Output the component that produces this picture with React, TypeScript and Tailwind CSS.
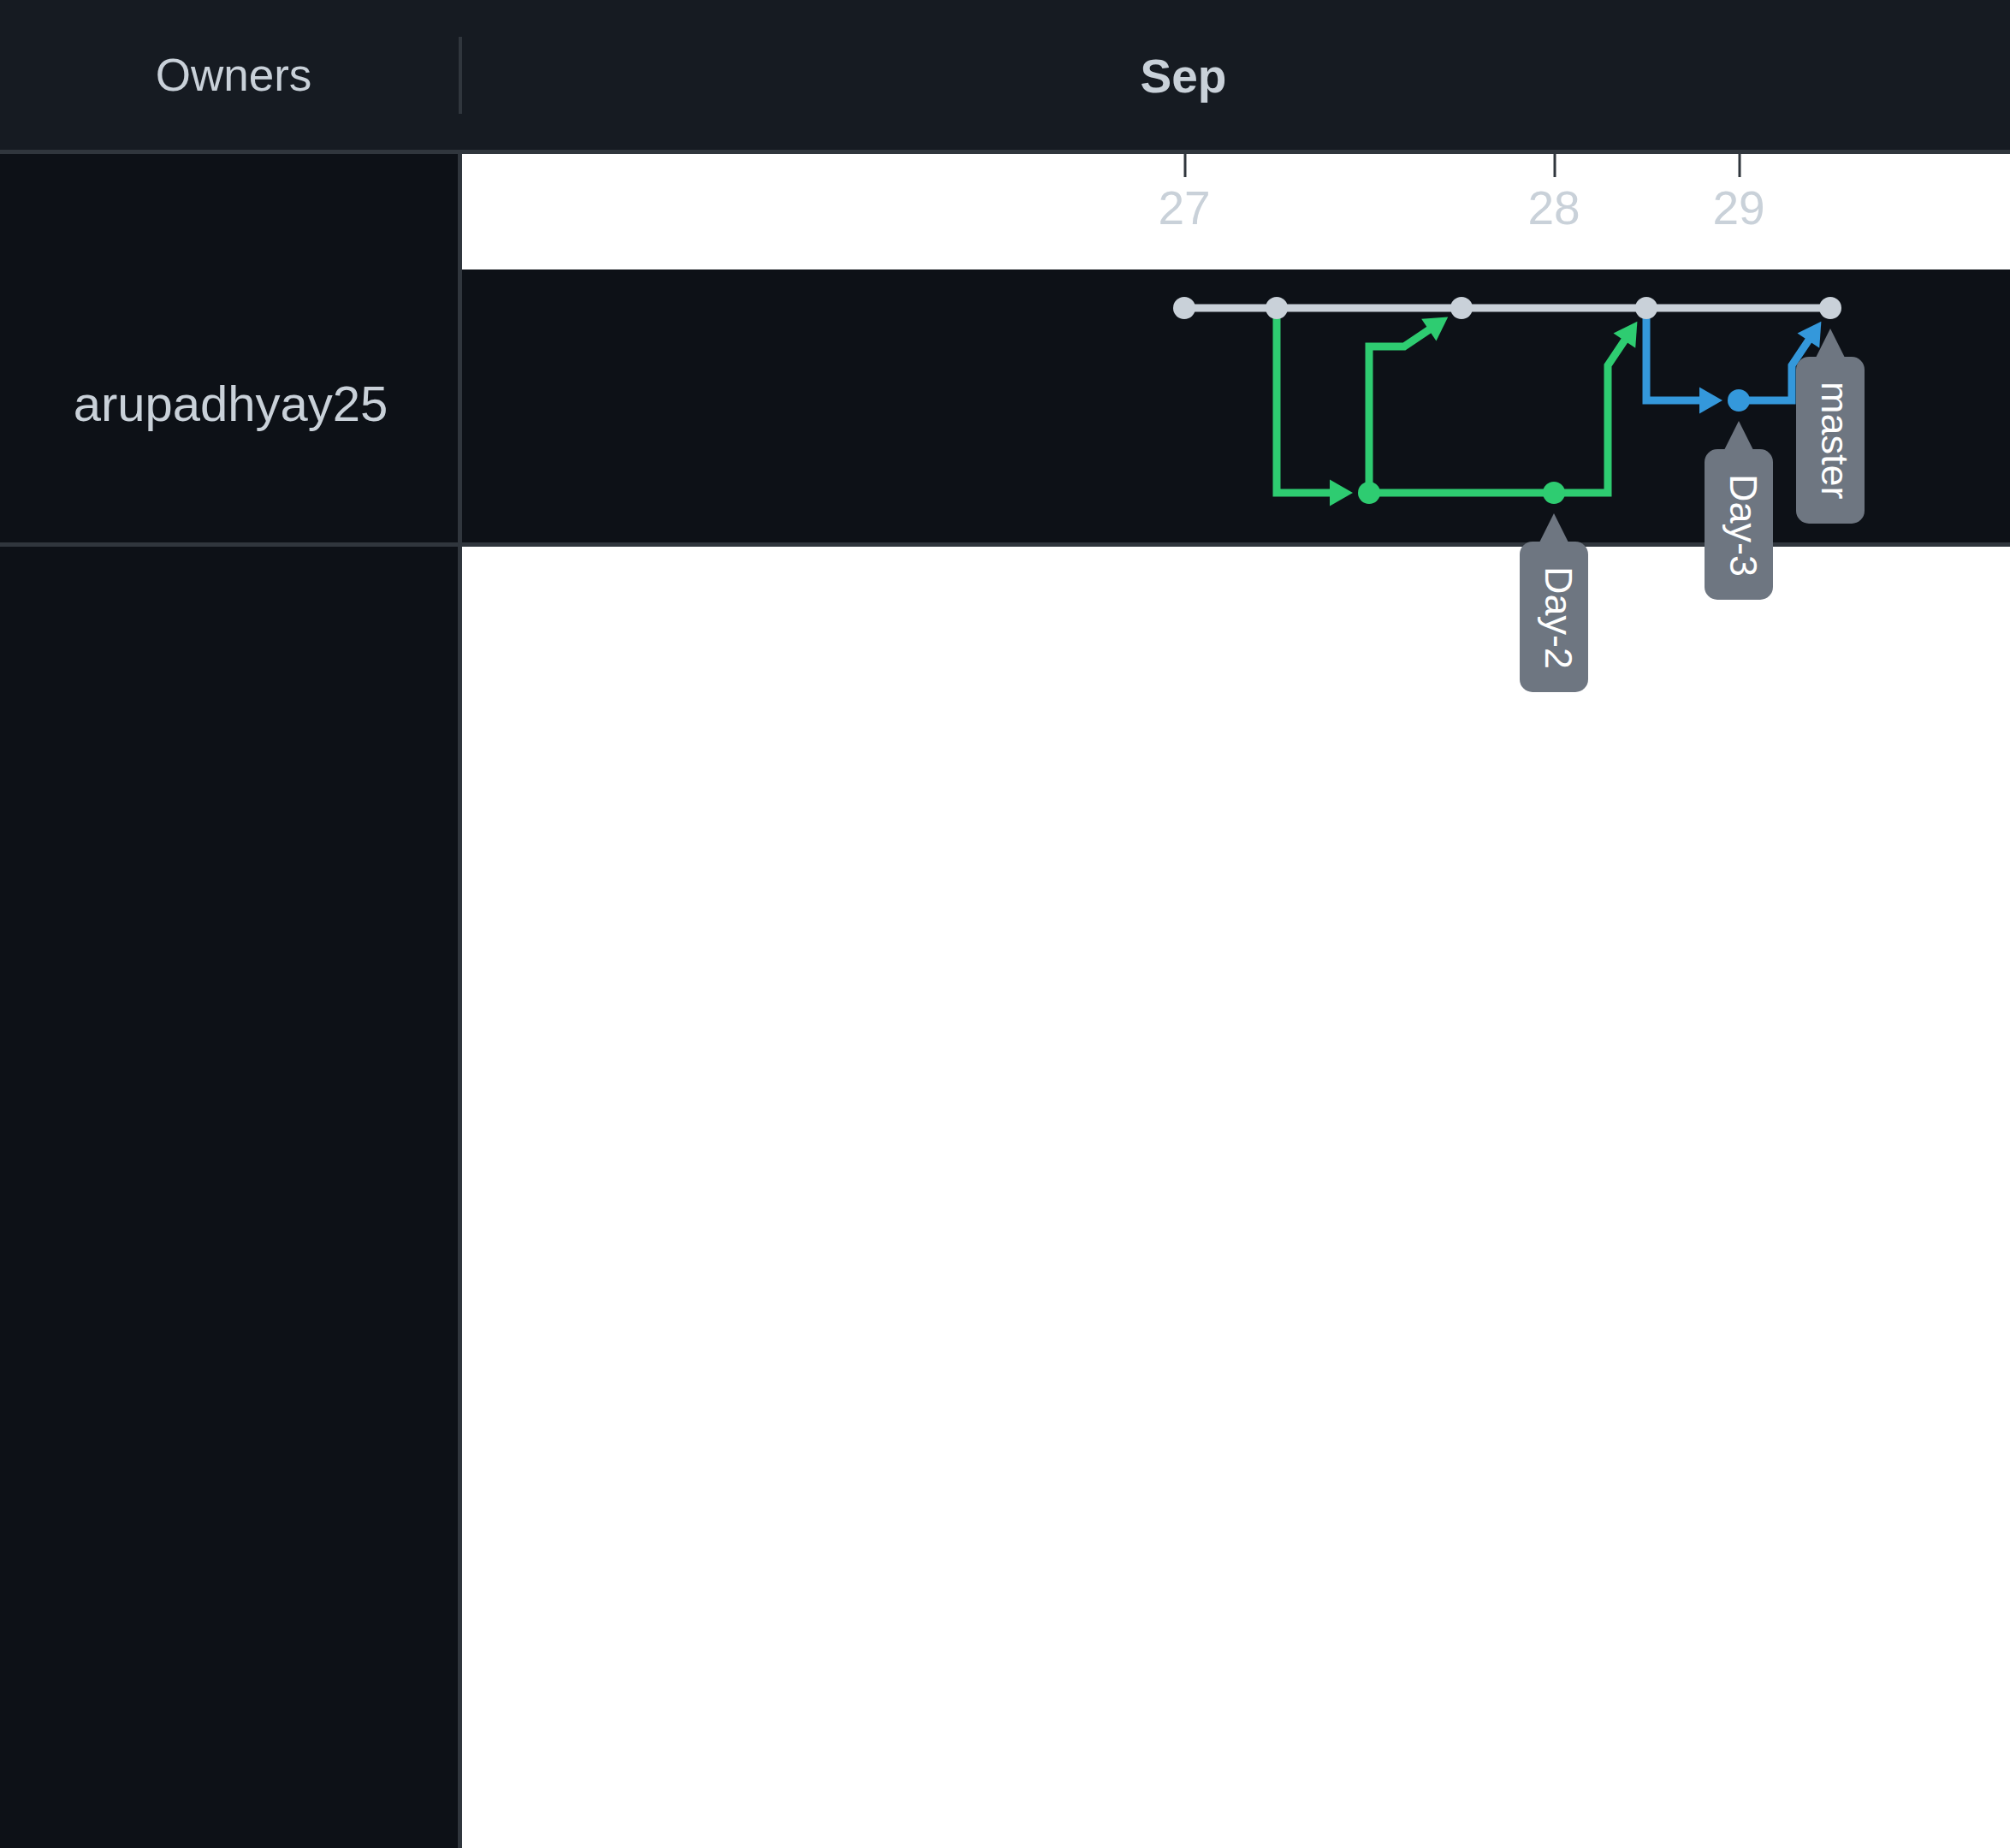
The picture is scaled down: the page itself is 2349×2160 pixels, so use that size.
type Pt = [number, number]

const MAIN = '#c9d1d9'
const GREEN = '#2ecc71'
const BLUE = '#3498db'

const ticks = [
  { x: 1385, label: '27' },
  { x: 1817, label: '28' },
  { x: 2033, label: '29' },
]

const mainCommits = [1384, 1492, 1708, 1924, 2139]

const commits: { x: number; y: number; color: string }[] = [
  ...mainCommits.map((x) => ({ x, y: 360, color: MAIN })),
  { x: 1600, y: 576, color: GREEN },
  { x: 1816, y: 576, color: GREEN },
  { x: 2032, y: 468, color: BLUE },
]

// straight runs between commits on the same branch
const runs: { color: string; from: Pt; to: Pt }[] = [
  { color: MAIN, from: [1384, 360], to: [2139, 360] },
  { color: GREEN, from: [1600, 576], to: [1816, 576] },
]

// every edge ends in an arrow pointing at its target commit
const edges: { color: string; points: Pt[]; target: Pt }[] = [
  { color: GREEN, points: [[1492, 360], [1492, 576]], target: [1600, 576] },
  { color: GREEN, points: [[1600, 576], [1600, 405], [1641, 405]], target: [1708, 360] },
  { color: GREEN, points: [[1816, 576], [1879, 576], [1879, 427]], target: [1924, 360] },
  { color: BLUE, points: [[1924, 360], [1924, 468]], target: [2032, 468] },
  { color: BLUE, points: [[2032, 468], [2094, 468], [2094, 427]], target: [2139, 360] },
]

const tags = [
  { name: 'Day-2', x: 1816, y: 576, len: 176 },
  { name: 'Day-3', x: 2032, y: 468, len: 176 },
  { name: 'master', x: 2139, y: 360, len: 195 },
]

function arrowHead(from: Pt, to: Pt) {
  const dx = to[0] - from[0]
  const dy = to[1] - from[1]
  const d = Math.hypot(dx, dy)
  const ux = dx / d
  const uy = dy / d
  const tip: Pt = [to[0] - 19 * ux, to[1] - 19 * uy]
  const base: Pt = [tip[0] - 27 * ux, tip[1] - 27 * uy]
  const nx = -uy
  const ny = ux
  const poly = [tip, [base[0] + 15.5 * nx, base[1] + 15.5 * ny], [base[0] - 15.5 * nx, base[1] - 15.5 * ny]]
    .map((p) => p.join(','))
    .join(' ')
  const lineEnd: Pt = [base[0] + 2 * ux, base[1] + 2 * uy]
  return { poly, lineEnd }
}

function Graph() {
  return (
    <svg
      className="absolute left-0 top-0 pointer-events-none overflow-visible font-['Liberation_Sans',Arial,sans-serif]"
      width={1809}
      height={1980}
      viewBox="540 180 1809 1980"
    >
      {ticks.map((t) => (
        <g key={t.label}>
          <line x1={t.x} x2={t.x} y1={180} y2={207} stroke="#30363d" strokeWidth={3} />
          <text x={t.x - 1} y={262} textAnchor="middle" fontSize={55} fill="#c9d1d9">
            {t.label}
          </text>
        </g>
      ))}

      {runs.map((r, i) => (
        <line key={i} x1={r.from[0]} y1={r.from[1]} x2={r.to[0]} y2={r.to[1]} stroke={r.color} strokeWidth={9} />
      ))}

      {edges.map((e, i) => {
        const last = e.points[e.points.length - 1]
        const { poly, lineEnd } = arrowHead(last, e.target)
        const d = [...e.points, lineEnd].map((p, j) => `${j ? 'L' : 'M'}${p[0]},${p[1]}`).join(' ')
        return (
          <g key={i}>
            <path d={d} fill="none" stroke={e.color} strokeWidth={9} />
            <polygon points={poly} fill={e.color} />
          </g>
        )
      })}

      {commits.map((c, i) => (
        <circle key={i} cx={c.x} cy={c.y} r={13} fill={c.color} />
      ))}

      {tags.map((t) => {
        const tip = t.y + 24
        const top = tip + 33
        return (
          <g key={t.name}>
            <polygon points={`${t.x},${tip} ${t.x - 18},${top + 3} ${t.x + 18},${top + 3}`} fill="#6e7681" />
            <rect x={t.x - 40} y={top} width={80} height={t.len} rx={15} fill="#6e7681" />
            <text transform={`translate(${t.x - 10} ${top + 29}) rotate(90)`} fontSize={45} fill="#ffffff">
              {t.name}
            </text>
          </g>
        )
      })}
    </svg>
  )
}

export default function App() {
  return (
    <div className="h-[2160px] w-full flex flex-col bg-white font-['Liberation_Sans',Arial,sans-serif] overflow-hidden">
      <header className="h-[180px] shrink-0 flex items-center bg-[#161b22] border-b-[5px] border-[#30363d]">
        <div className="w-[536px] pl-[10px] flex justify-center text-[53px] text-[#c9d1d9]">Owners</div>
        <div className="w-[4px] h-[90px] bg-[#30363d]" />
        <div className="relative flex-1 h-full">
          <span className="absolute left-[843px] top-[48px] -translate-x-1/2 text-[55px] font-bold text-[#c9d1d9]">
            Sep
          </span>
        </div>
      </header>

      <div className="flex flex-1">
        <aside className="w-[540px] shrink-0 flex flex-col bg-[#0d1117] border-r-[5px] border-[#30363d]">
          <div className="h-[135px]" />
          <div className="h-[324px] flex items-center justify-center pl-[4px] pb-[6px] border-b-[5px] border-[#30363d] text-[58px] text-[#c9d1d9]">
            arupadhyay25
          </div>
        </aside>

        <main className="relative flex-1 flex flex-col">
          <div className="h-[135px] bg-white" />
          <div className="h-[324px] bg-[#0d1117] border-b-[5px] border-[#30363d]" />
          <div className="flex-1 bg-white" />
          <Graph />
        </main>
      </div>
    </div>
  )
}
